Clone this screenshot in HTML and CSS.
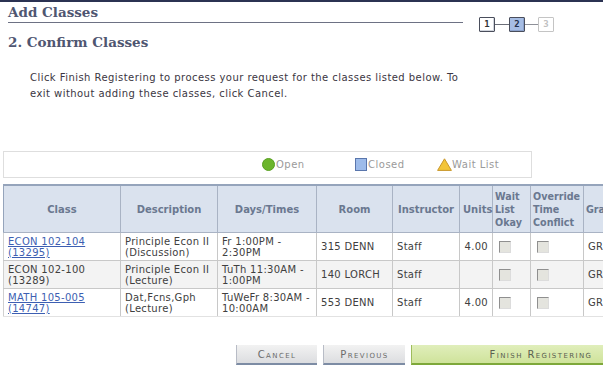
FILE: index.html
```html
<!DOCTYPE html>
<html lang="en">
<head>
    <meta charset="UTF-8">
    <title>Add Classes - Confirm Classes</title>
    <link rel="stylesheet" href="styles.css">
</head>
<body>
    <div class="head">
        <h1 class="title">Add Classes</h1>
        <div class="steps">
            <span class="step done">1</span>
            <span class="link"></span>
            <span class="step current">2</span>
            <span class="link"></span>
            <span class="step todo">3</span>
        </div>
    </div>
    <h2 class="subtitle">2. Confirm Classes</h2>
    <p class="intro">Click Finish Registering to process your request for the classes listed below. To exit without adding these classes, click Cancel.</p>

    <div class="legend">
        <div class="legend-item wide"><span class="ico open"></span>Open</div>
        <div class="legend-item mid"><span class="ico closed"></span>Closed</div>
        <div class="legend-item"><svg class="tri" width="15" height="13" viewBox="0 0 15 13"><polygon points="7.5,0.8 14.4,12.4 0.6,12.4" fill="#f3c53a" stroke="#c8962a" stroke-width="1"/></svg>Wait List</div>
    </div>

    <table class="classes">
        <colgroup>
            <col style="width:117px"><col style="width:97px"><col style="width:99px"><col style="width:76px">
            <col style="width:67px"><col style="width:33px"><col style="width:38px"><col style="width:53px"><col style="width:70px">
        </colgroup>
        <thead>
            <tr>
                <th>Class</th>
                <th>Description</th>
                <th>Days/Times</th>
                <th>Room</th>
                <th>Instructor</th>
                <th>Units</th>
                <th class="left">Wait List Okay</th>
                <th class="left">Override Time Conflict</th>
                <th class="left">Grading</th>
            </tr>
        </thead>
        <tbody>
            <tr>
                <td><a href="#">ECON 102-104 (13295)</a></td>
                <td>Principle Econ II (Discussion)</td>
                <td>Fr 1:00PM -<br>2:30PM</td>
                <td>315 DENN</td>
                <td>Staff</td>
                <td class="num">4.00</td>
                <td><span class="check"></span></td>
                <td><span class="check"></span></td>
                <td>GRD</td>
            </tr>
            <tr class="alt">
                <td>ECON 102-100<br>(13289)</td>
                <td>Principle Econ II (Lecture)</td>
                <td>TuTh 11:30AM -<br>1:00PM</td>
                <td>140 LORCH</td>
                <td>Staff</td>
                <td class="num"></td>
                <td><span class="check"></span></td>
                <td><span class="check"></span></td>
                <td>GRD</td>
            </tr>
            <tr>
                <td><a href="#">MATH 105-005 (14747)</a></td>
                <td>Dat,Fcns,Gph<br>(Lecture)</td>
                <td>TuWeFr 8:30AM -<br>10:00AM</td>
                <td>553 DENN</td>
                <td>Staff</td>
                <td class="num">4.00</td>
                <td><span class="check"></span></td>
                <td><span class="check"></span></td>
                <td>GRD</td>
            </tr>
        </tbody>
    </table>

    <div class="actions">
        <button class="btn cancel">Cancel</button>
        <button class="btn previous">Previous</button>
        <button class="btn finish">Finish Registering</button>
    </div>
</body>
</html>
```

FILE: styles.css
```css
body {
    margin: 0;
    border-top: 2px solid #2b3252;
    font-family: "DejaVu Sans", Verdana, sans-serif;
    color: #3a3a3a;
    background: #fff;
    overflow: hidden;
    width: 603px;
    height: 363px;
}
.head {
    display: flex;
    align-items: flex-start;
    padding-left: 8px;
}
.title {
    width: 455px;
    margin: 0;
    padding: 3px 0 2px;
    border-bottom: 1px solid #6d7184;
    font-family: "DejaVu Serif", Georgia, serif;
    font-size: 13.5px;
    line-height: 15px;
    color: #4f5671;
}
.steps {
    display: flex;
    align-items: center;
    margin: 15px 0 0 16px;
}
.step {
    width: 14px;
    height: 13px;
    border: 1px solid #4a4e5c;
    border-radius: 1px;
    font-family: "DejaVu Sans Mono", monospace;
    font-weight: bold;
    font-size: 9px;
    line-height: 13px;
    text-align: center;
    box-shadow: inset -1px -1px 0 #d0d4dc;
}
.step.done { background: #fff; color: #333; }
.step.current { background: #a6bde4; color: #23304c; box-shadow: inset -1px -1px 0 #8ca2cc; }
.step.todo { border-color: #c4c4c4; color: #c0c0c0; box-shadow: none; }
.link {
    width: 14px;
    height: 1px;
    background: #6b6e78;
}
.link + .step.current + .link { width: 13px; background: #8e9098; }
.subtitle {
    margin: 3px 0 0 8px;
    font-family: "DejaVu Serif", Georgia, serif;
    font-size: 13.5px;
    line-height: 15px;
    color: #4f5671;
}
.intro {
    width: 445px;
    margin: 20px 0 0 30px;
    font-size: 10px;
    line-height: 16px;
    letter-spacing: 0.45px;
    color: #3b3642;
}
.legend {
    display: flex;
    align-items: center;
    width: 269px;
    height: 25px;
    margin: 49px 0 0 3px;
    padding-left: 258px;
    border: 1px solid #dedede;
    font-size: 10px;
    letter-spacing: 0.5px;
    color: #9a9a9a;
}
.legend-item {
    display: flex;
    align-items: center;
}
.legend-item.wide { width: 93px; }
.legend-item.mid { width: 82px; }
.ico {
    display: inline-block;
    box-sizing: border-box;
}
.ico.open {
    width: 13px;
    height: 13px;
    margin-right: 1px;
    border-radius: 50%;
    background: #6cb52c;
    border: 1px solid #58a020;
}
.ico.closed {
    width: 12px;
    height: 13px;
    margin-right: 1px;
    background: #9dbbea;
    border: 1px solid #5a76ac;
}
.tri { display: block; }
.classes {
    border-collapse: collapse;
    table-layout: fixed;
    width: 650px;
    margin: 6px 0 0 3px;
    font-size: 10px;
    line-height: 11px;
    letter-spacing: 0.3px;
}
.classes th {
    height: 46px;
    padding: 0 3px;
    background: #dae2ee;
    border: 1px solid #a9b3c4;
    border-top: 2px solid #95a4bb;
    color: #6a7890;
    font-weight: bold;
    text-align: center;
    line-height: 13px;
    letter-spacing: 0;
}
.classes th.left {
    padding: 0 1px 0 2px;
    text-align: left;
    font-size: 9.6px;
}
.classes th:first-child { border-left-color: #95a4bb; }
.classes td {
    height: 27px;
    padding: 0 4px;
    border: 1px solid #c8c8c8;
    vertical-align: middle;
    color: #404040;
}
.classes td:first-child { border-left-color: #d0d0d0; }
.classes tr.alt td { background: #f3f3f3; }
.classes tbody tr:last-child td { border-bottom-color: #e2e2e2; }
.classes td.num { text-align: right; }
.classes a {
    color: #3d5fb2;
    text-decoration: underline;
}
.check {
    display: block;
    width: 10px;
    height: 10px;
    margin-left: 2px;
    background: #e4e4de;
    border-top: 1px solid #8f8f8f;
    border-left: 1px solid #8f8f8f;
    border-bottom: 1px solid #dcdcdc;
    border-right: 1px solid #dcdcdc;
}
.actions {
    display: flex;
    gap: 6px;
    margin: 28px 0 0 236px;
}
.btn {
    height: 20px;
    padding: 0;
    border: none;
    border-left: 1px solid #b8bcc6;
    border-bottom: 2px solid #7d8ca4;
    background: linear-gradient(#f2f2f2, #dcdde0);
    font-family: "DejaVu Sans", Verdana, sans-serif;
    font-size: 10px;
    font-variant: small-caps;
    letter-spacing: 1.4px;
    color: #6b6b6b;
    flex: none;
}
.btn.cancel { width: 81px; }
.btn.previous { width: 82px; }
.btn.finish {
    width: 259px;
    background: linear-gradient(#e0eebb, #cfe39b);
    border-left-color: #9ebc5c;
    border-bottom-color: #7ea83a;
    color: #5a6050;
}
```
